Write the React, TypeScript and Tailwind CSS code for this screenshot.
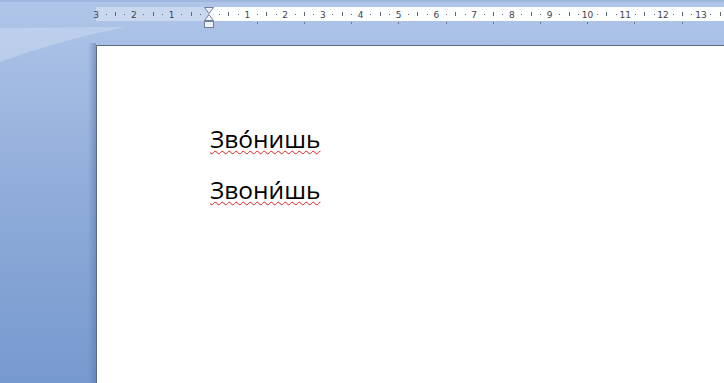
import React from "react";

const CM = 37.8;
const ZERO = 113.5;

function Ruler() {
  const nums: { x: number; label: string }[] = [];
  for (let n = -3; n <= 13; n++) {
    if (n === 0) continue;
    nums.push({ x: ZERO + n * CM, label: String(Math.abs(n)) });
  }
  const marks: { x: number; kind: "dot" | "tick" }[] = [];
  for (let n = -3; n <= 14; n++) {
    const base = ZERO + n * CM;
    marks.push({ x: base + CM / 4, kind: "dot" });
    marks.push({ x: base + CM / 2, kind: "tick" });
    marks.push({ x: base + (3 * CM) / 4, kind: "dot" });
  }
  const tabs: number[] = [];
  for (let i = 1; i < 12; i++) tabs.push(ZERO + i * 47.2);

  return (
    <svg width={628} height={22} className="block overflow-visible">
      <rect x={0} y={0} width={628} height={14} fill="#fdfefe" />
      <rect x={0} y={0} width={113} height={14} fill="#c9d8ef" />
      {marks.map((m, i) =>
        m.kind === "dot" ? (
          <rect key={i} x={Math.round(m.x)} y={7} width={1} height={1} fill="#5b6676" />
        ) : (
          <rect key={i} x={Math.round(m.x)} y={5} width={1} height={4} fill="#5b6676" />
        )
      )}
      {nums.map((n, i) => (
        <text
          key={i}
          x={n.x}
          y={10.5}
          textAnchor="middle"
          fontSize={9}
          fontFamily="'DejaVu Sans', sans-serif"
          fill="#3d4450"
        >
          {n.label}
        </text>
      ))}
      {tabs.map((t, i) => (
        <rect key={i} x={Math.round(t)} y={15} width={1} height={2} fill="#6c7a90" />
      ))}
    </svg>
  );
}

function IndentMarker() {
  return (
    <svg width={12} height={22} className="absolute left-[203px] top-[5px]">
      <path d="M1.5 0.5 H10.5 L6 6.5 Z" fill="#eef2f8" stroke="#6f7f99" />
      <path d="M6 7.5 L10.5 13.5 H1.5 Z" fill="#eef2f8" stroke="#6f7f99" />
      <rect x={1.5} y={14.5} width={9} height={6} fill="#eef2f8" stroke="#6f7f99" />
    </svg>
  );
}

export default function App() {
  return (
    <div className="relative h-[383px] w-[724px] overflow-hidden bg-gradient-to-b from-[#b0c6e9] via-[#90acd9] to-[#7699cf]">
      <div className="h-[2px] bg-[#9fb7df]" />
      <svg width={200} height={80} className="absolute left-0 top-[20px]">
        <path d="M0 8 L125 7 Q60 20 0 42 Z" fill="#ffffff" fillOpacity={0.22} />
      </svg>
      <div className="relative pl-[96px] pt-[5px]">
        <Ruler />
        <IndentMarker />
      </div>
      <div className="absolute bottom-0 left-[88px] top-[43px] w-[8px] bg-gradient-to-r from-transparent to-[#5d7bab]/60" />
      <div className="ml-[96px] mt-[16px] h-[340px] border-l border-t border-[#5e6c82] bg-white pl-[113px] pt-[67px] font-['Open_Sans',sans-serif] text-[24.5px] leading-[51px] text-black">
        <div>
          <span className="underline decoration-wavy decoration-[#e0201a] decoration-1 underline-offset-[2px]">
            Зво́нишь
          </span>
        </div>
        <div>
          <span className="underline decoration-wavy decoration-[#e0201a] decoration-1 underline-offset-[2px]">
            Звони́шь
          </span>
        </div>
      </div>
    </div>
  );
}
